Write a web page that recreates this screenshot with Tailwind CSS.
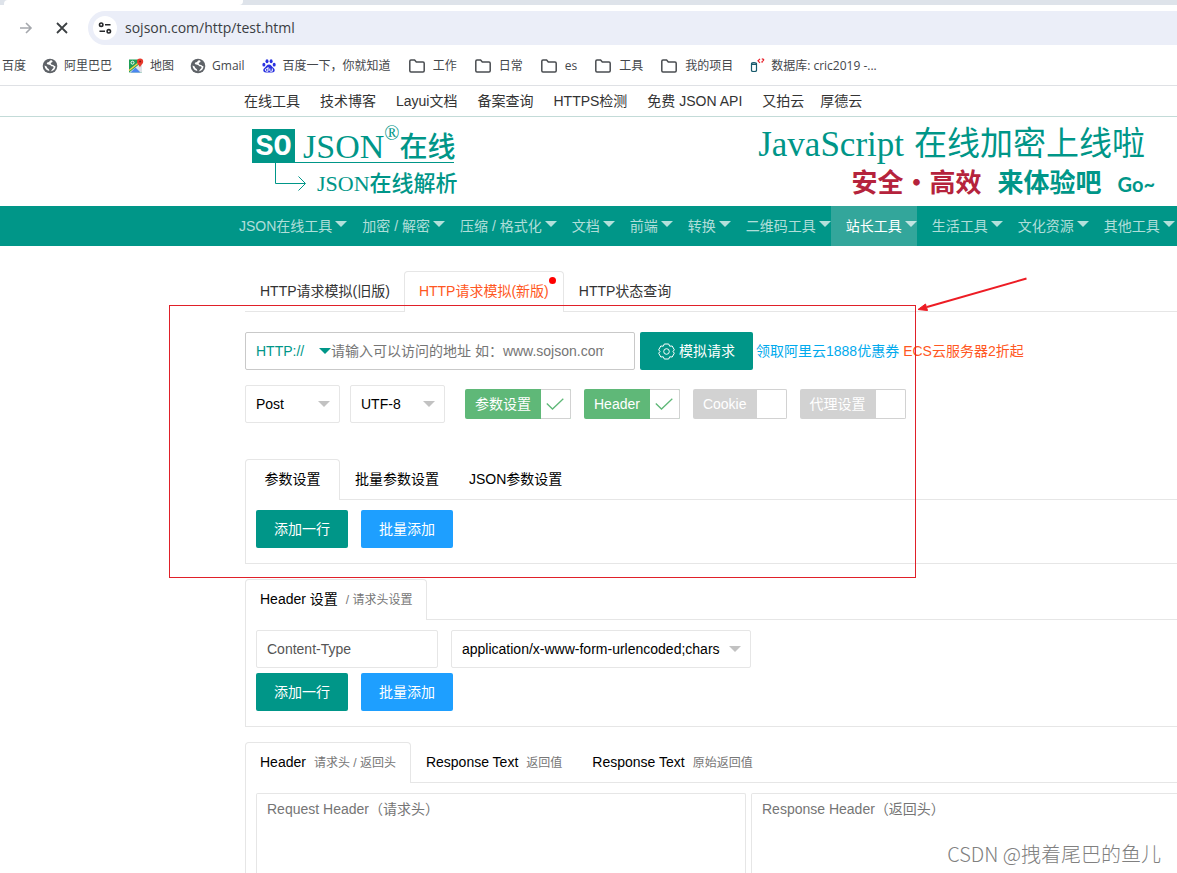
<!DOCTYPE html>
<html lang="zh-CN">
<head>
<meta charset="utf-8">
<title>HTTP请求模拟 - SOJSON在线</title>
<script src="https://cdn.jsdelivr.net/npm/@tailwindcss/browser@4"></script>
</head>
<body class="bg-white">
<svg class="hidden" aria-hidden="true">
  <symbol id="folder" viewBox="0 0 16 16"><path d="M.8 3.200c0-.7.5-1.200 1.200-1.200h3.600l1.700 2h6.700c.7 0 1.200.5 1.200 1.200v7.600c0 .7-.5 1.200-1.200 1.200H2c-.7 0-1.200-.5-1.200-1.200z" fill="none" stroke="#4a4d51" stroke-width="1.500"/></symbol>
  <symbol id="globe" viewBox="0 0 16 16"><circle cx="8" cy="8" r="7.300" fill="#5f6368"/><path d="M9.300 2.200c-2 .2-1.600 1.800-3.200 2.100-1.400.3-1.700 1.400-.8 2 .9.500 3 .1 3.400 1.300.3 1 1.500.6 2.300.9 1 .4.600 1.700-.3 2.300-.8.500-.9 1.800-2.200 2.600 3.200-.3 5-2.700 5-5.200-1.200.2-1.400-.9-2.500-1.100-1.400-.2-2.400-.7-2.200-1.800.200-1.100 1.400-.8 1.700-1.600.2-.6-.3-1.200-1.200-1.500zM2.500 7.600c.200 2.900 2 5 4.700 5.500.2-1.200-.2-2-1.300-2.500-1-.5-.7-1.700-1.600-2.300z" fill="#fff"/></symbol>
</svg>
<div class="relative min-h-screen overflow-hidden font-['Liberation_Sans','Noto_Sans_CJK_SC',sans-serif] text-sm text-[#333]">

  <!-- Browser toolbar -->
  <div class="font-['Open_Sans','Noto_Sans_CJK_SC',sans-serif]">
    <div class="flex h-[5px] bg-[#dee3ea]"><div class="ml-1 h-[5px] w-[239px] rounded-tl-sm rounded-br-sm bg-white"></div></div>
    <div class="flex h-10 items-start pt-[6px]">
      <button aria-label="前进" class="ml-[18px] mt-[9px]"><svg class="size-4" viewBox="0 0 16 16" fill="none" stroke="#a5a8ad" stroke-width="1.600"><path d="M2 8h11M8 3l5 5-5 5"/></svg></button>
      <button aria-label="停止" class="ml-5 mt-[9px]"><svg class="size-4" viewBox="0 0 16 16" fill="none" stroke="#3c4043" stroke-width="1.800"><path d="m3 3 10 10M13 3 3 13"/></svg></button>
      <div class="ml-[18px] flex h-[34px] flex-1 items-center rounded-l-full bg-[#ebeef8] pl-[5px]">
        <span class="flex size-6 items-center justify-center rounded-full bg-white"><svg class="size-4" viewBox="0 0 16 16" fill="none" stroke="#26282b" stroke-width="1.600"><circle cx="4.200" cy="4.700" r="1.700"/><path d="M8 4.700h5.500M2.500 11.300H8"/><circle cx="11.800" cy="11.300" r="1.700"/></svg></span>
        <input aria-label="地址" class="ml-2 flex-1 bg-transparent text-sm text-[#3a3d42] outline-none" value="sojson.com/http/test.html">
      </div>
    </div>
    <div class="flex h-[41px] items-center gap-4 whitespace-nowrap border-b border-[#dfe1e5] pl-[2px] pt-px text-xs text-[#44474b]">
      <a href="#">百度</a>
      <a href="#" class="flex items-center gap-[6px]"><svg class="size-4"><use href="#globe"/></svg>阿里巴巴</a>
      <a href="#" class="flex items-center gap-[6px]"><svg class="size-4" viewBox="0 0 16 16"><path d="M1 1.500h13v13H1z" fill="#1e9e57"/><path d="M1 14.500 14 4v10.500z" fill="#dfe3e8"/><path d="m2.500 14.500 5-5 5 5z" fill="#4a86f0"/><path d="m1 12.500 10-8" stroke="#fbd24b" stroke-width="1.500"/><circle cx="4.500" cy="4.700" r="1.500" fill="none" stroke="#fff"/><path d="M12 9.500C11.500 7 9 6.300 9 3.500a3 3 0 0 1 6.200 0c0 2.800-2.700 3.500-3.200 6z" fill="#e8392c"/><circle cx="12.100" cy="3.600" r="1" fill="#8b1a12"/></svg>地图</a>
      <a href="#" class="flex items-center gap-[6px]"><svg class="size-4"><use href="#globe"/></svg>Gmail</a>
      <a href="#" class="flex items-center gap-[6px]"><svg class="size-4" viewBox="0 0 16 16" fill="#2a32e0"><ellipse cx="2.900" cy="6.700" rx="1.500" ry="1.900"/><ellipse cx="6" cy="3.200" rx="1.500" ry="2"/><ellipse cx="10.100" cy="3.200" rx="1.500" ry="2"/><ellipse cx="13.200" cy="6.700" rx="1.500" ry="1.900"/><path d="M8 6.500c2 0 2.600 1.800 4 3 1.800 1.500 2 2.500 1.500 3.700-.7 1.500-2.600 1.300-5.500 1.300s-4.800.2-5.500-1.300c-.5-1.200-.3-2.200 1.500-3.700 1.400-1.200 2-3 4-3z"/><path d="M7 9v4.200H5.300c-1.300 0-1.300-2.500 0-2.500H7M8.800 10.500v2c0 .7.500.8 2.500.7v-2.700" fill="none" stroke="#fff"/></svg>百度一下，你就知道</a>
      <a href="#" class="ml-[2px] flex items-center gap-2"><svg class="size-4"><use href="#folder"/></svg>工作</a>
      <a href="#" class="ml-[2px] flex items-center gap-2"><svg class="size-4"><use href="#folder"/></svg>日常</a>
      <a href="#" class="ml-[2px] flex items-center gap-2"><svg class="size-4"><use href="#folder"/></svg>es</a>
      <a href="#" class="ml-[2px] flex items-center gap-2"><svg class="size-4"><use href="#folder"/></svg>工具</a>
      <a href="#" class="ml-[2px] flex items-center gap-2"><svg class="size-4"><use href="#folder"/></svg>我的项目</a>
      <a href="#" class="flex items-center gap-[6px]"><svg class="size-4" viewBox="0 0 16 16" fill="none"><path d="M2.500 5.500v7c0 1.300 5 1.300 5 0v-7c0-1.300-5-1.300-5 0zc0 1.200 5 1.200 5 0" stroke="#17596b" stroke-width="1.200"/><path d="m11 .8-2 2 2 2M12.800.8c3 .3 2 2 .3 2.700v1.300" stroke="#e8202a" stroke-width="1.200"/></svg>数据库: cric2019 -...</a>
    </div>
  </div>

  <!-- Site links -->
  <nav class="flex h-[31px] items-center gap-5 whitespace-nowrap border-b border-[#c3dbd8] pl-[244px]">
    <a href="#">在线工具</a><a href="#">技术博客</a><a href="#">Layui文档</a><a href="#">备案查询</a><a href="#">HTTPS检测</a><a href="#">免费 JSON API</a><span class="flex gap-4"><a href="#">又拍云</a><a href="#">厚德云</a></span>
  </nav>

  <!-- Logo and banner -->
  <header class="flex h-[89px] justify-between pl-[252px] text-[#009688]">
    <a href="#" class="mt-3 block w-[210px] whitespace-nowrap font-['Liberation_Serif','Noto_Sans_CJK_SC',serif]">
      <span class="flex h-[34px] w-[202px] items-center border-b border-[#009688]">
        <span class="flex h-[34px] w-[43px] shrink-0 items-center justify-center bg-[#009688] pt-1 font-['Liberation_Mono',monospace] text-[30px] font-bold text-white">SO</span>
        <span class="ml-2 mt-1 text-[34px]">JSON</span><sup class="-mt-[6px] text-xl">®</sup><span class="mt-1 text-[28px] font-medium">在线</span>
      </span>
      <span class="flex items-start">
        <svg class="ml-[22px] h-[30px] w-8" viewBox="0 0 32 30" fill="none" stroke="#009688"><path d="M1.500 0v20.500H31M24.500 13.500l7 7-7 7"/></svg>
        <span class="ml-[11px] mt-[5px] text-[22px] font-medium">JSON在线解析</span>
      </span>
    </a>
    <a href="#" class="mr-[22px] flex flex-col items-end whitespace-nowrap font-['Liberation_Serif','Noto_Sans_CJK_SC',serif]">
      <span class="mr-[10px] mt-[7px] flex h-[42px] items-center gap-[10px]"><span class="text-[35px]">JavaScript</span><span class="text-[33px]">在线加密上线啦</span></span>
      <span class="flex h-9 items-center gap-4 text-[26px] font-bold"><span class="text-[#b5233c]">安全・高效</span><span>来体验吧</span><span class="font-['Lato'] text-xl">Go~</span></span>
    </a>
  </header>

  <!-- Main navigation -->
  <nav class="flex h-10 whitespace-nowrap bg-[#009688] pl-[224px] leading-10 text-white/70 [&>a]:flex [&>a]:pl-[15px] [&>a]:after:ml-[3px] [&>a]:after:mt-[15px] [&>a]:after:size-0 [&>a]:after:border-x-6 [&>a]:after:border-t-6 [&>a]:after:border-x-transparent [&>a]:after:border-t-white/70 [&>a]:after:content-['']">
    <a href="#">JSON在线工具</a><a href="#">加密 / 解密</a><a href="#">压缩 / 格式化</a><a href="#">文档</a><a href="#">前端</a><a href="#">转换</a><a href="#">二维码工具</a><a href="#" class="bg-[#33a69b] text-white">站长工具</a><a href="#">生活工具</a><a href="#">文化资源</a><a href="#">其他工具</a>
  </nav>

  <main class="-mr-[75px] ml-[245px] pt-[25px]">
    <div class="flex border-b border-[#e6e6e6] leading-10">
      <a href="#" class="pl-[15px] pr-[14px]">HTTP请求模拟(旧版)</a>
      <a href="#" class="relative -mb-px h-[41px] rounded-t-sm border border-b-0 border-[#e6e6e6] bg-white px-[14px] leading-[38px] text-[#ff5722]">HTTP请求模拟(新版)<span class="absolute right-[7px] top-[5px] size-[7px] rounded-full bg-[#f00]"></span></a>
      <a href="#" class="px-[15px]">HTTP状态查询</a>
    </div>

    <form>
      <div class="mt-5 flex items-center">
        <div class="flex h-[38px] w-[390px] rounded-xs border border-[#c9c9c9]">
          <div class="relative w-[85px]">
            <select aria-label="协议" class="h-full w-full appearance-none pl-[10px] text-[#009688] outline-none"><option>HTTP://</option><option>HTTPS://</option></select>
            <span class="pointer-events-none absolute right-0 top-[15px] border-x-6 border-t-6 border-x-transparent border-t-[#009688]"></span>
          </div>
          <div class="flex min-w-0 flex-1 pr-[30px]"><input aria-label="请求地址" class="w-full outline-none placeholder:text-[#757575]" placeholder="请输入可以访问的地址 如：www.sojson.com"></div>
        </div>
        <button type="button" class="ml-[5px] flex h-[38px] w-[113px] items-center justify-center gap-1 rounded-xs bg-[#009688] text-white"><svg class="size-[17px]" viewBox="0 0 17 17" fill="none" stroke="#fff"><path d="M6.300 1h4.400l1 2.200 2.500-.2 2.100 3.800L15 8.500l1.300 1.700-2.100 3.800-2.500-.2-1 2.200H6.300l-1-2.200-2.500.2-2.100-3.800L2 8.500.7 6.800 2.800 3l2.500.2z"/><circle cx="8.500" cy="8.500" r="2.800"/></svg>模拟请求</button>
        <a href="#" class="ml-[3px] text-[#01aaed]">领取阿里云1888优惠券</a>
        <a href="#" class="ml-1 text-[#ff5722]">ECS云服务器2折起</a>
      </div>

      <div class="mt-[15px] flex items-center text-black">
        <div class="relative h-[38px] w-[95px]">
          <select aria-label="请求方式" class="h-full w-full appearance-none rounded-xs border border-[#e6e6e6] pl-[10px]"><option>Post</option><option>Get</option></select>
          <span class="pointer-events-none absolute right-[10px] top-4 border-x-6 border-t-6 border-x-transparent border-t-[#c2c2c2]"></span>
        </div>
        <div class="relative ml-[10px] h-[38px] w-[95px]">
          <select aria-label="编码" class="h-full w-full appearance-none rounded-xs border border-[#e6e6e6] pl-[10px]"><option>UTF-8</option><option>GBK</option></select>
          <span class="pointer-events-none absolute right-[10px] top-4 border-x-6 border-t-6 border-x-transparent border-t-[#c2c2c2]"></span>
        </div>
        <div class="ml-5 flex gap-[13px] leading-[30px] text-white">
          <label class="flex h-[30px] rounded-xs bg-[#5fb878]"><input type="checkbox" checked class="sr-only"><span class="px-[10px]">参数设置</span><span class="flex w-[30px] items-center rounded-r-xs border border-l-0 border-[#d2d2d2] bg-white pl-[5px]"><svg class="h-3 w-[18px]" viewBox="0 0 18 12" fill="none" stroke="#5fb878" stroke-width="1.300"><path d="m.8 5.500 5.700 5.500L17.300.8"/></svg></span></label>
          <label class="flex h-[30px] rounded-xs bg-[#5fb878]"><input type="checkbox" checked class="sr-only"><span class="px-[10px]">Header</span><span class="flex w-[30px] items-center rounded-r-xs border border-l-0 border-[#d2d2d2] bg-white pl-[5px]"><svg class="h-3 w-[18px]" viewBox="0 0 18 12" fill="none" stroke="#5fb878" stroke-width="1.300"><path d="m.8 5.500 5.700 5.500L17.300.8"/></svg></span></label>
          <label class="flex h-[30px] rounded-xs bg-[#d2d2d2]"><input type="checkbox" class="sr-only"><span class="px-[10px]">Cookie</span><span class="w-[30px] rounded-r-xs border border-l-0 border-[#d2d2d2] bg-white"></span></label>
          <label class="flex h-[30px] rounded-xs bg-[#d2d2d2]"><input type="checkbox" class="sr-only"><span class="px-[10px]">代理设置</span><span class="w-[30px] rounded-r-xs border border-l-0 border-[#d2d2d2] bg-white"></span></label>
        </div>
      </div>

      <section class="mt-9 text-black">
        <div class="flex border-b border-[#e6e6e6] leading-10">
          <a href="#" class="-mb-px h-[41px] w-[95px] rounded-t-sm border border-b-0 border-[#e6e6e6] bg-white text-center leading-[38px]">参数设置</a>
          <a href="#" class="px-[15px]">批量参数设置</a>
          <a href="#" class="px-[15px]">JSON参数设置</a>
        </div>
        <div class="flex gap-[13px] border border-t-0 border-[#e6e6e6] px-[10px] pb-[15px] pt-[10px] text-white">
          <button type="button" class="h-[38px] w-[92px] rounded-xs bg-[#009688]">添加一行</button>
          <button type="button" class="h-[38px] w-[92px] rounded-xs bg-[#1e9fff]">批量添加</button>
        </div>
      </section>

      <section class="mt-[15px] text-black">
        <div class="flex border-b border-[#e6e6e6] leading-10">
          <a href="#" class="-mb-px flex h-[41px] gap-2 rounded-t-sm border border-b-0 border-[#e6e6e6] bg-white px-[14px] leading-[38px]">Header 设置 <span class="text-xs leading-10 text-[#777]">/ 请求头设置</span></a>
        </div>
        <div class="border border-t-0 border-[#e6e6e6] px-[10px] pb-[15px] pt-[10px]">
          <div class="flex gap-[13px]">
            <input aria-label="Header 名称" class="h-[38px] w-[182px] rounded-xs border border-[#e6e6e6] px-[10px] text-[#555]" value="Content-Type">
            <div class="relative h-[38px] w-[300px]">
              <select aria-label="Header 值" class="h-full w-full appearance-none rounded-xs border border-[#e6e6e6] pl-[10px] pr-[30px]"><option>application/x-www-form-urlencoded;charset=UTF-8</option></select>
              <span class="pointer-events-none absolute right-[10px] top-4 border-x-6 border-t-6 border-x-transparent border-t-[#c2c2c2]"></span>
            </div>
          </div>
          <div class="mt-[5px] flex gap-[13px] text-white">
            <button type="button" class="h-[38px] w-[92px] rounded-xs bg-[#009688]">添加一行</button>
            <button type="button" class="h-[38px] w-[92px] rounded-xs bg-[#1e9fff]">批量添加</button>
          </div>
        </div>
      </section>

      <section class="mt-[15px] text-black">
        <div class="flex h-[41px] border-b border-[#e6e6e6] leading-10">
          <a href="#" class="flex h-[41px] gap-2 rounded-t-sm border border-b-0 border-[#e6e6e6] bg-white px-[14px] leading-[38px]">Header <span class="text-xs leading-10 text-[#777]">请求头 / 返回头</span></a>
          <a href="#" class="flex gap-2 px-[15px]">Response Text <span class="text-xs leading-[42px] text-[#777]">返回值</span></a>
          <a href="#" class="flex gap-2 px-[15px]">Response Text <span class="text-xs leading-[42px] text-[#777]">原始返回值</span></a>
        </div>
        <div class="flex gap-[5px] border-x border-[#e6e6e6] px-[10px] pt-[10px]">
          <textarea aria-label="Request Header" class="h-20 min-w-0 flex-1 resize-none rounded-t-xs border border-b-0 border-[#e6e6e6] px-[10px] py-[5px] placeholder:text-[#757575]" placeholder="Request Header（请求头）"></textarea>
          <textarea aria-label="Response Header" class="h-20 min-w-0 flex-1 resize-none rounded-t-xs border border-b-0 border-[#e6e6e6] px-[10px] py-[5px] placeholder:text-[#757575]" placeholder="Response Header（返回头）"></textarea>
        </div>
      </section>
    </form>
  </main>

  <!-- Annotations over the page -->
  <div class="pointer-events-none absolute left-[169px] top-[305px] h-[273px] w-[747px] border border-[#e02029]"></div>
  <svg class="pointer-events-none absolute left-[916px] top-[276px] h-9 w-28" viewBox="0 0 112 36"><path d="M110.500 2.500 11 31" stroke="#ed1c24" stroke-width="2"/><path d="m2 33.500 7.500-5.500 2 6.500z" fill="#ed1c24" stroke="#ed1c24"/></svg>
  <div class="pointer-events-none absolute bottom-[5px] right-4 whitespace-nowrap font-['Noto_Sans_CJK_SC',sans-serif] text-xl font-light text-[#808080]">CSDN @拽着尾巴的鱼儿</div>
</div>
</body>
</html>
